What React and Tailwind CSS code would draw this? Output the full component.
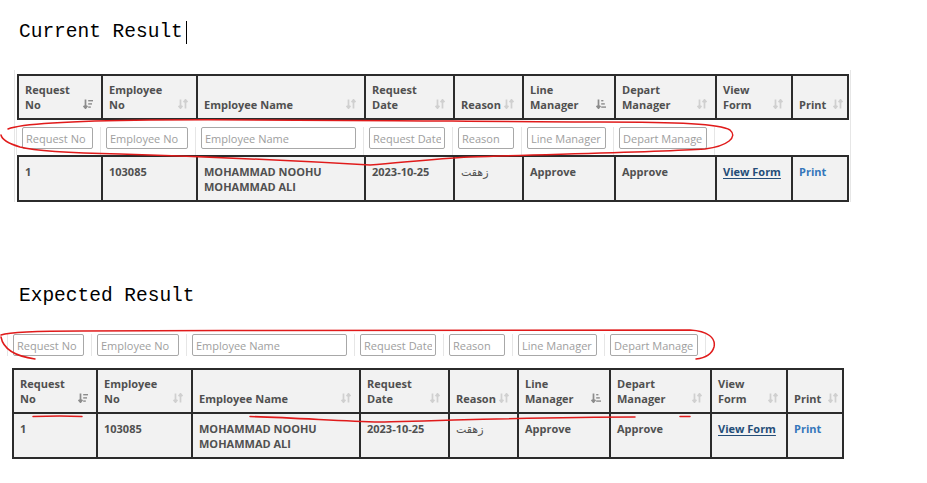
import React from 'react';

const COLS = 'grid-cols-[84px_95px_168px_89px_69px_92px_101px_76px_56px]';
const FONT = "font-['Open_Sans','DejaVu_Sans',sans-serif]";

const HEADERS = [
    { lines: ['Request', 'No'], sort: 'desc' },
    { lines: ['Employee', 'No'] },
    { lines: ['Employee Name'] },
    { lines: ['Request', 'Date'] },
    { lines: ['Reason'] },
    { lines: ['Line', 'Manager'], sort: 'asc' },
    { lines: ['Depart', 'Manager'] },
    { lines: ['View', 'Form'] },
    { lines: ['Print'], tight: true },
];

const FILTERS = ['Request No', 'Employee No', 'Employee Name', 'Request Date', 'Reason', 'Line Manager', 'Depart Manage'];

const SortIcon = ({ sort }) => {
    if (!sort) {
        return (
            <svg width="10" height="10" viewBox="0 0 10 10" className="mb-[3px] shrink-0" fill="none" stroke="#d0d0d0" strokeWidth="1.7">
                <path d="M2.5 0.5V9M0.6 6.8L2.5 9.2L4.4 6.8" />
                <path d="M7.5 9.5V1M5.6 3.2L7.5 0.8L9.4 3.2" />
            </svg>
        );
    }
    const bars = sort === 'desc' ? [5, 3.8, 2.6] : [2.2, 3.6, 5];
    return (
        <svg width="10" height="10" viewBox="0 0 10 10" className="mb-[3px] shrink-0" fill="none">
            <g stroke="#8c8c8c" strokeWidth="1.7">
                <path d="M2.5 0.5V9M0.6 6.8L2.5 9.2L4.4 6.8" />
            </g>
            {bars.map((w, i) => (
                <rect key={i} x="5.2" y={1 + i * 3.2} width={w} height="1.4" fill="#8c8c8c" />
            ))}
        </svg>
    );
};

const HeaderRow = () => (
    <div className={`grid ${COLS} border-l-2 border-t-2 border-[#2b2b2b]`}>
        {HEADERS.map((h, i) => (
            <div
                key={i}
                className={`flex items-end justify-between border-r-2 border-b-2 border-[#2b2b2b] bg-[#f2f2f2] pl-[6px] pt-[6px] pb-[6px] ${h.tight ? 'pr-[4px]' : 'pr-[8px]'}`}
            >
                <div className="h-[30px] flex flex-col justify-end">
                    {h.lines.map((l) => (
                        <span key={l} className="block leading-[15px] whitespace-nowrap">{l}</span>
                    ))}
                </div>
                <SortIcon sort={h.sort} />
            </div>
        ))}
    </div>
);

const BodyRow = ({ withTop }) => {
    const cell = 'border-r-2 border-b-2 border-[#2b2b2b] bg-[#f2f2f2] pl-[6px] pt-[7px] pb-[6px] leading-[15px]';
    return (
        <div className={`grid ${COLS} border-l-2 border-[#2b2b2b] ${withTop ? 'border-t-2' : ''}`}>
            <div className={cell}>1</div>
            <div className={cell}>103085</div>
            <div className={cell}>
                <span className="block">MOHAMMAD NOOHU</span>
                <span className="block">MOHAMMAD ALI</span>
            </div>
            <div className={cell}>2023-10-25</div>
            <div className={`${cell} font-normal`}>زهقت</div>
            <div className={cell}>Approve</div>
            <div className={cell}>Approve</div>
            <div className={cell}>
                <a className="text-[#244d78] underline underline-offset-2">View Form</a>
            </div>
            <div className={cell}>
                <a className="text-[#3477bb]">Print</a>
            </div>
        </div>
    );
};

const FilterRow = ({ className }) => (
    <div className={`grid ${COLS} ${className}`}>
        {FILTERS.map((f) => (
            <div key={f} className="border-l border-[#e6e6e6] pl-[5px] pr-[7px]">
                <input
                    placeholder={f}
                    className="block h-[22px] w-full rounded-[2px] border border-[#a8a8a8] bg-white px-[3px] text-[11px] font-medium text-[#555] placeholder:text-[#9e9e9e] outline-none"
                />
            </div>
        ))}
        <div className="border-l border-[#e6e6e6]" />
        <div />
    </div>
);

const Title = ({ children, caret }) => (
    <div className="flex items-center pl-[19px] h-[22px] font-['Liberation_Mono',monospace] text-[19.5px] font-normal leading-[22px] text-black">
        <span>{children}</span>
        {caret && <span className="ml-[3px] h-[23px] w-px bg-black" />}
    </div>
);

export default function App() {
    return (
        <div className={`relative h-[483px] w-[927px] overflow-hidden bg-white ${FONT} text-[11px] font-bold text-[#505050]`}>
            <div className="pt-[21px]">
                <Title caret>Current Result</Title>
            </div>

            {/* current table */}
            <div className="mt-[27px] ml-[14px] w-fit border-x border-[#e6e6e6] pt-[4px] pl-[2px] pr-px">
                <HeaderRow />
                <FilterRow className="h-[35px] pt-[7px] -ml-px" />
                <BodyRow withTop />
            </div>

            <div className="mt-[83px]">
                <Title>Expected Result</Title>
            </div>

            {/* expected table */}
            <FilterRow className="mt-[21px] ml-[7px] w-fit pt-[6px] pb-[4px]" />
            <div className="mt-[8px] ml-[12px] w-fit">
                <HeaderRow />
                <BodyRow />
            </div>

            {/* red annotations */}
            <svg className="pointer-events-none absolute inset-0" width="927" height="483" fill="none" stroke="#e01b1b" strokeWidth="1.5" strokeLinecap="round">
                <path d="M8 129 C20 124 60 121 150 120 C300 119 500 122 600 122 C680 122 720 124 730 130 C738 137 728 146 705 149 C660 152 560 154 470 157 C430 159 400 163 370 165 C300 161 220 157 120 154 C70 153 35 151 20 147 C10 144 2 140 1 135" />
                <path d="M1 335 C10 332 30 331 80 331 C300 330 550 330 690 330 C708 331 716 338 714 347 C712 354 705 358 696 359" />
                <path d="M1 337 C3 348 14 356 35 359" />
                <path d="M33 416.5 C50 416 70 416 82 416.5" />
                <path d="M250 416.5 C300 418 340 421 380 422 C450 420 550 417 635 417" />
                <path d="M680 416.5 L690 416.5" />
            </svg>
        </div>
    );
}
